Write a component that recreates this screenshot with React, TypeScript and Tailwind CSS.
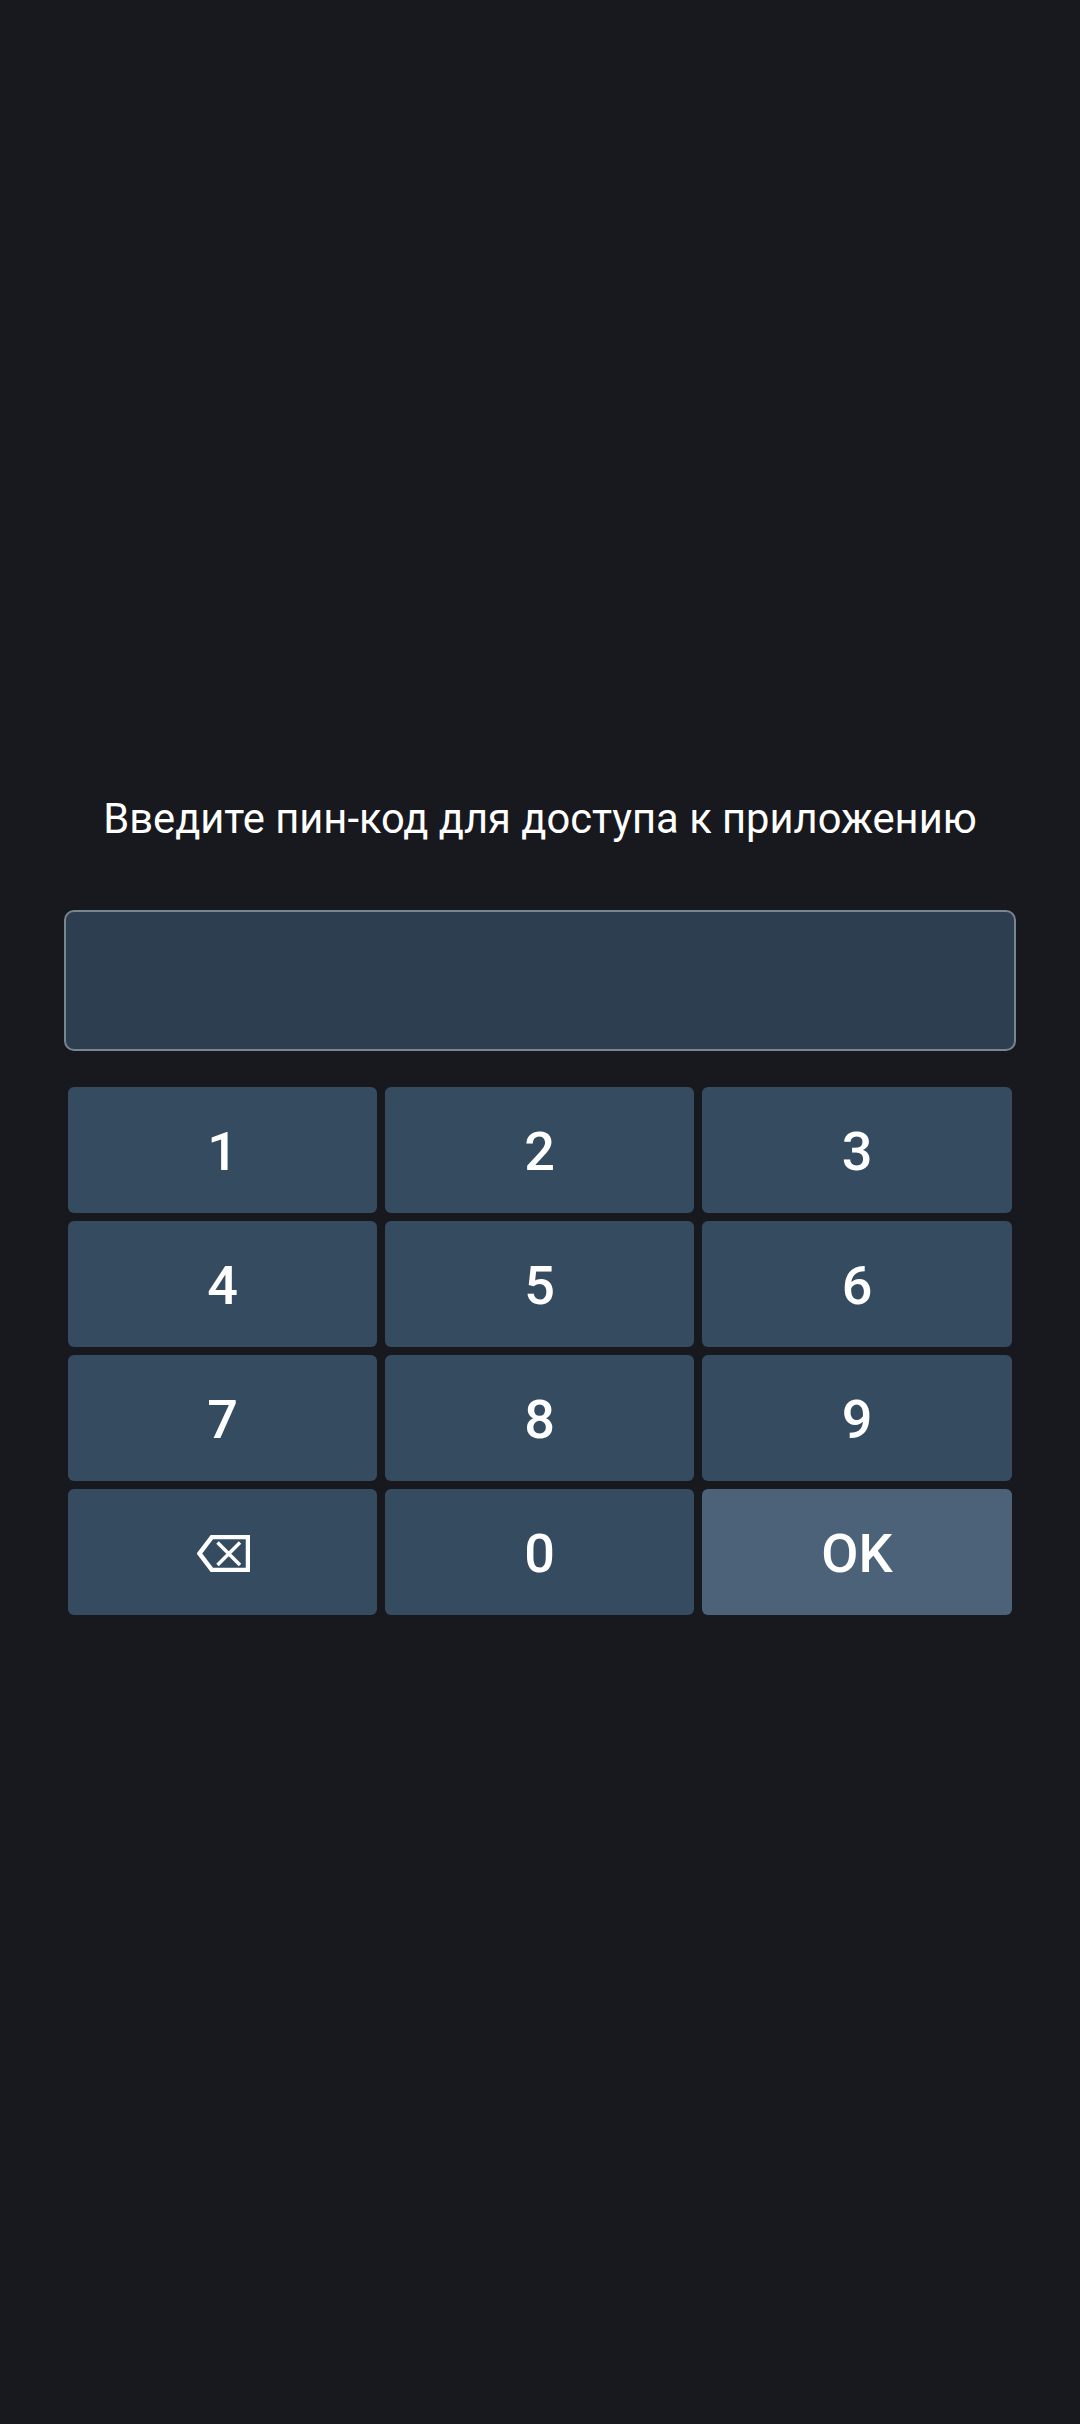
const KEYS = ["1", "2", "3", "4", "5", "6", "7", "8", "9"];

function BackspaceIcon() {
  return (
    <svg className="ml-[2px] h-[37px] w-[53px]" viewBox="0 0 53 37" fill="none" stroke="currentColor">
      <path d="M15 2H51V35H15L2.5 18.5Z" strokeWidth="4.5" />
      <path d="M20.5 7.5 43 30M43 7.5 20.5 30" strokeWidth="3.5" />
    </svg>
  );
}

function Key({ children, className }: { children: React.ReactNode; className: string }) {
  return (
    <button className={`flex h-[126px] items-center justify-center rounded-[6px] pt-[3px] text-[54px] font-medium text-white ${className}`}>
      {children}
    </button>
  );
}

export default function App() {
  return (
    <div className="flex min-h-[2424px] flex-col bg-[#18191e] px-16 pt-[794px] font-['Roboto',sans-serif]">
      <p className="text-center text-[41.7px] leading-[50px] text-white">Введите пин-код для доступа к приложению</p>
      <div className="mt-[66px] h-[141px] rounded-[10px] border-2 border-[#78868f] bg-[#2c3e50]" />
      <div className="mt-9 grid grid-cols-[309px_309px_310px] gap-2 px-1">
        {KEYS.map((k) => (
          <Key key={k} className="bg-[#354b60]">{k}</Key>
        ))}
        <Key className="bg-[#354b60]"><BackspaceIcon /></Key>
        <Key className="bg-[#354b60]">0</Key>
        <Key className="bg-[#4c6279]">OK</Key>
      </div>
    </div>
  );
}
